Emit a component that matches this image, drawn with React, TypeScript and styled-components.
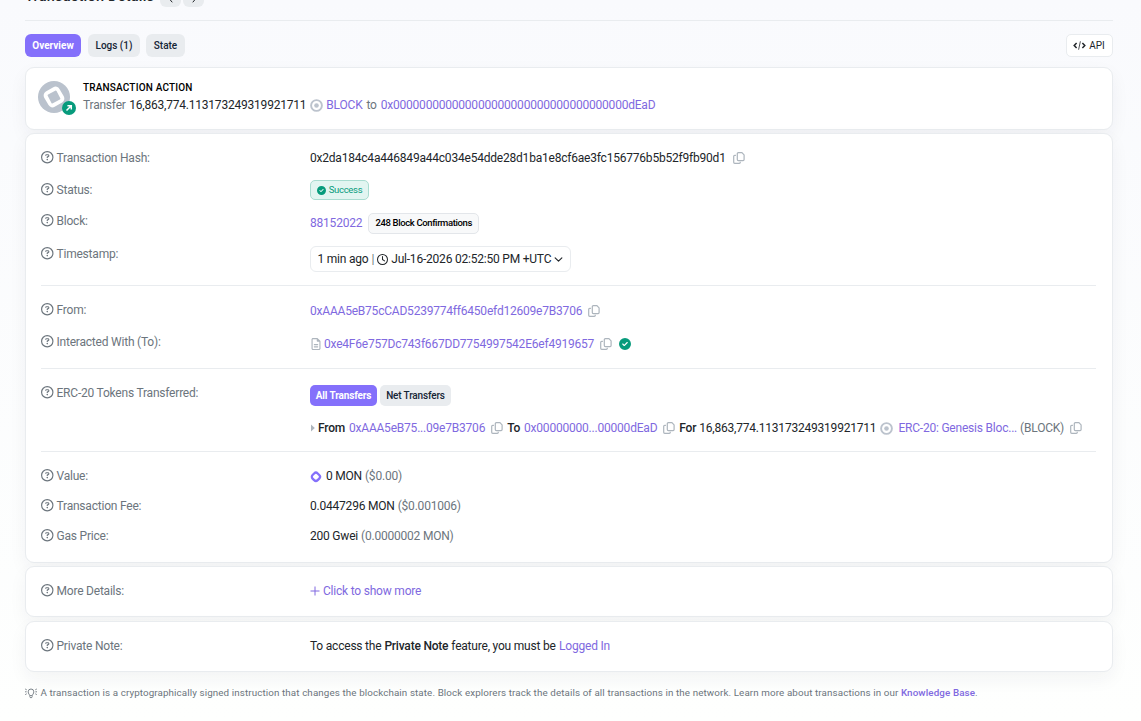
import React from 'react';
import styled, { createGlobalStyle } from 'styled-components';
import {
  FaRegCircleQuestion,
  FaRegFileLines,
  FaRegClock,
  FaCircleCheck,
} from 'react-icons/fa6';

const color = {
  link: '#8069e0',
  accent: '#8470fb',
  text: '#212529',
  muted: '#6c757d',
  line: '#e9ecef',
  faint: '#adb5bd',
  green: '#079b7c',
};

const GlobalStyle = createGlobalStyle`
  * { box-sizing: border-box; }
  body {
    margin: 0;
    height: 721px;
    overflow: hidden;
    background: linear-gradient(#f9fafd, #fefffe);
    font: 12px/20px Roboto, sans-serif;
    letter-spacing: -0.21px;
    color: ${color.text};
  }
  svg { flex: none; display: block; }
`;

const Page = styled.main`
  height: 721px;
  padding: 0 28px 0 25px;
  overflow: hidden;
`;

const Header = styled.header`
  display: flex;
  align-items: flex-end;
  height: 21px;
  padding-bottom: 13px;
  border-bottom: 1px solid ${color.line};
`;

const Title = styled.h1`
  width: 135px;
  margin: 0;
  font-size: 14.5px;
  line-height: 20px;
  font-weight: 500;
  letter-spacing: 0.22px;
  white-space: nowrap;
`;

const NavButton = styled.button`
  display: grid;
  place-items: center;
  width: 21px;
  height: 21px;
  margin: 0 2px 0 0;
  padding: 5px 0 0;
  border: 0;
  border-radius: 6px;
  background: ${color.line};
  color: ${color.text};
`;

const Tabs = styled.nav`
  display: flex;
  align-items: center;
  gap: 6px;
  height: 23px;
  margin: 13px 0 10px;
`;

const Tab = styled.button<{ $active?: boolean; $width: number; $small?: boolean }>`
  width: ${(p) => p.$width}px;
  height: ${(p) => (p.$small ? 21 : 23)}px;
  padding: ${(p) => (p.$small ? 0 : '1px 0 0')};
  border: 0;
  border-radius: ${(p) => (p.$small ? 5 : 6)}px;
  background: ${(p) => (p.$active ? color.accent : color.line)};
  color: ${(p) => (p.$active ? '#fff' : '#152536')};
  font: ${(p) => (p.$active ? 700 : 500)} 10px/20px Roboto, sans-serif;
  letter-spacing: ${(p) => (p.$small ? -0.15 : 0)}px;
  white-space: nowrap;
`;

const MainTab = styled(Tab)`
  margin-right: ${(p) => (p.$active ? 1 : 0)}px;
`;

const ApiButton = styled.button`
  display: flex;
  align-items: center;
  justify-content: center;
  gap: 3px;
  width: 47px;
  height: 23px;
  margin-left: auto;
  padding: 0 1px 0 0;
  border: 1px solid ${color.line};
  border-radius: 5px;
  background: #fff;
  color: ${color.text};
  font: 10px/20px Roboto, sans-serif;
`;

const Card = styled.section<{ $height: number; $gap?: number; $pad?: string }>`
  height: ${(p) => p.$height}px;
  margin-bottom: ${(p) => p.$gap ?? 3}px;
  padding: ${(p) => p.$pad ?? '14px 16px 14px 15px'};
  border: 1px solid ${color.line};
  border-radius: 9px;
  background: #fff;
  box-shadow: 0 7px 18px rgba(30, 35, 60, 0.05);
`;

const ActionCard = styled(Card)`
  display: flex;
  gap: 8px;
`;

const TokenAvatar = styled.div`
  position: relative;
  width: 37px;
  height: 33px;
`;

const AvatarBadge = styled.span`
  position: absolute;
  right: -1px;
  bottom: -1px;
`;

const ActionTitle = styled.div`
  font-size: 10px;
  line-height: 14px;
  font-weight: 500;
  letter-spacing: 0.18px;
  color: #000;
`;

const Line = styled.div<{ $height?: number; $top?: number }>`
  display: flex;
  align-items: center;
  height: ${(p) => p.$height ?? 20}px;
  margin-top: ${(p) => p.$top ?? 0}px;
  white-space: nowrap;
`;

const Text = styled.span<{ $tone?: 'muted' | 'strong'; $gap?: number }>`
  margin-right: ${(p) => p.$gap ?? 3}px;
  color: ${(p) => (p.$tone === 'muted' ? color.muted : color.text)};
  font-weight: ${(p) => (p.$tone === 'strong' ? 500 : 400)};
`;

const Link = styled.a<{ $gap?: number }>`
  margin-right: ${(p) => p.$gap ?? 3}px;
  color: ${color.link};
`;

const BlockLink = styled(Link)`
  padding-bottom: 1px;
`;

const Icon = styled.span<{ $gap?: number; $color?: string }>`
  display: flex;
  margin-right: ${(p) => p.$gap ?? 3}px;
  color: ${(p) => p.$color ?? color.faint};
`;

const Row = styled.div<{ $top?: number }>`
  display: grid;
  grid-template-columns: 269px 1fr;
  margin-top: ${(p) => p.$top ?? 0}px;
`;

const Label = styled.div`
  display: flex;
  align-items: center;
  gap: 3px;
  height: 20px;
  color: ${color.muted};
  white-space: nowrap;

  svg { margin-top: -1px; }
`;

const Divider = styled.hr<{ $top?: number }>`
  height: 1px;
  margin: ${(p) => p.$top ?? 13}px 0 0;
  border: 0;
  background: ${color.line};
`;

const Badge = styled.span<{ $success?: boolean; $width: number }>`
  display: flex;
  align-items: center;
  justify-content: center;
  gap: 3px;
  width: ${(p) => p.$width}px;
  height: ${(p) => (p.$success ? 20 : 21)}px;
  padding-bottom: ${(p) => (p.$success ? 0 : 1)}px;
  border: 1px solid ${(p) => (p.$success ? '#a9dcd1' : '#e3e6ea')};
  border-radius: 5px;
  background: ${(p) => (p.$success ? '#e2f5f1' : '#f8f9fa')};
  color: ${(p) => (p.$success ? color.green : '#000')};
  font-size: 9.5px;
  font-weight: ${(p) => (p.$success ? 400 : 500)};
  letter-spacing: ${(p) => (p.$success ? -0.3 : -0.38)}px;
`;

const TimeButton = styled.button`
  display: flex;
  align-items: center;
  width: 261px;
  height: 26px;
  padding: 0 6.5px;
  border: 1px solid ${color.line};
  border-radius: 6px;
  background: #fff;
  color: ${color.text};
  font: 12px/20px Roboto, sans-serif;
  letter-spacing: -0.21px;
  white-space: nowrap;
`;

const Footnote = styled.footer`
  display: flex;
  align-items: center;
  height: 20px;
  margin-top: 11px;
  font-size: 9.8px;
  letter-spacing: 0.11px;
  color: ${color.muted};
  white-space: nowrap;
`;

const KnowledgeLink = styled.a`
  color: ${color.link};
  font-weight: 500;
`;

const Copy = ({ gap }: { gap?: number }) => (
  <Icon $gap={gap}>
    <svg width="12" height="12" viewBox="0 0 12 12" fill="none" stroke="currentColor" strokeWidth="1.2">
      <path d="M5.3.7h3.6l2.2 2.2v4.7a1 1 0 0 1-1 1H5.3a1 1 0 0 1-1-1V1.7a1 1 0 0 1 1-1z" />
      <path d="M2.9 3.3H1.7a1 1 0 0 0-1 1v6a1 1 0 0 0 1 1h4.6a1 1 0 0 0 1-1V9.8" />
    </svg>
  </Icon>
);

const TokenDot = ({ gap }: { gap?: number }) => (
  <Icon $gap={gap}>
    <svg width="13" height="13" viewBox="0 0 13 13">
      <circle cx="6.5" cy="6.5" r="5.4" fill="#fff" stroke="#bcc3cd" strokeWidth="1.9" />
      <circle cx="6.5" cy="6.5" r="2.3" fill="#bcc3cd" />
    </svg>
  </Icon>
);

type FieldProps = { label: string; top?: number; children: React.ReactNode };

const Field = ({ label, top, children }: FieldProps) => (
  <Row $top={top}>
    <Label>
      <FaRegCircleQuestion size={12.5} />
      {label}
    </Label>
    <div>{children}</div>
  </Row>
);

const Chevron = ({ d, size = 8 }: { d: string; size?: number }) => (
  <svg width={size} height={size} viewBox="0 0 8 8" fill="none" stroke="currentColor" strokeWidth="1">
    <path d={d} strokeLinecap="round" strokeLinejoin="round" />
  </svg>
);

export default function App() {
  return (
    <>
      <GlobalStyle />
      <Page>
        <Header>
          <Title>Transaction Details</Title>
          <NavButton aria-label="Previous"><Chevron d="M5 1 2.5 4 5 7" /></NavButton>
          <NavButton aria-label="Next"><Chevron d="M3 1 5.5 4 3 7" /></NavButton>
        </Header>

        <Tabs>
          <MainTab $active $width={56}>Overview</MainTab>
          <MainTab $width={52}>Logs (1)</MainTab>
          <MainTab $width={39}>State</MainTab>
          <ApiButton>
            <svg width="13" height="9" viewBox="0 0 13 9" fill="none" stroke="currentColor">
              <path d="M3.6 2 1.2 4.5 3.6 7M9.4 2l2.4 2.5L9.4 7" strokeWidth="1.5" />
              <path d="M7.4.3 5.6 8.7" strokeWidth=".8" />
            </svg>
            API
          </ApiButton>
        </Tabs>

        <ActionCard $height={63} $pad="13px 12px">
          <TokenAvatar>
            <svg width="33" height="33" viewBox="0 0 33 33">
              <circle cx="16" cy="16" r="16" fill="#bac2cd" />
              <rect x="7.2" y="7.2" width="17.6" height="17.6" rx="4.5" fill="#fff" transform="rotate(60 16 16)" />
              <rect x="11" y="11" width="10" height="10" rx="1" fill="#bac2cd" transform="rotate(62 16 16)" />
            </svg>
            <AvatarBadge>
              <svg width="14" height="14" viewBox="0 0 14 14">
                <circle cx="7" cy="7" r="7" fill={color.green} />
                <path d="M4.5 9.5 9 5M5.4 4.7h3.9v3.9" fill="none" stroke="#fff" strokeWidth="1.5" />
              </svg>
            </AvatarBadge>
          </TokenAvatar>
          <div>
            <ActionTitle>TRANSACTION ACTION</ActionTitle>
            <Line>
              <Text $tone="muted" $gap={3.5}>Transfer</Text>
              <Text $gap={4}>16,863,774.113173249319921711</Text>
              <TokenDot />
              <Link $gap={4}>BLOCK</Link>
              <Text $tone="muted" $gap={4}>to</Text>
              <Link>0x000000000000000000000000000000000000dEaD</Link>
            </Line>
          </div>
        </ActionCard>

        <Card $height={430}>
          <Field label="Transaction Hash:">
            <Line>
              <Text $gap={7}>0x2da184c4a446849a44c034e54dde28d1ba1e8cf6ae3fc156776b5b52f9fb90d1</Text>
              <Copy />
            </Line>
          </Field>
          <Field label="Status:" top={12}>
            <Badge $success $width={59}>
              <FaCircleCheck size={9} />
              Success
            </Badge>
          </Field>
          <Field label="Block:" top={11}>
            <Line $top={2} $height={21}>
              <BlockLink $gap={6}>88152022</BlockLink>
              <Badge $width={111}>248 Block Confirmations</Badge>
            </Line>
          </Field>
          <Field label="Timestamp:" top={10}>
            <Line $top={2} $height={26}>
              <TimeButton>
                <Text>1 min ago</Text>
                <Text $tone="muted">|</Text>
                <Icon $color={color.text}><FaRegClock size={11} /></Icon>
                <Text>Jul-16-2026 02:52:50 PM +UTC</Text>
                <Chevron d="M1 2.5 4 5.5 7 2.5" size={9} />
              </TimeButton>
            </Line>
          </Field>
          <Divider />
          <Field label="From:" top={14}>
            <Line $top={1}>
              <Link $gap={6}>0xAAA5eB75cCAD5239774ff6450efd12609e7B3706</Link>
              <Copy />
            </Line>
          </Field>
          <Field label="Interacted With (To):" top={11}>
            <Line $top={2}>
              <Icon $gap={2}><FaRegFileLines size={12} /></Icon>
              <Link $gap={6}>0xe4F6e757Dc743f667DD7754997542E6ef4919657</Link>
              <Copy gap={7} />
              <Icon $color={color.green}><FaCircleCheck size={12} /></Icon>
            </Line>
          </Field>
          <Divider $top={14} />
          <Field label="ERC-20 Tokens Transferred:" top={14}>
            <Line $top={2} $height={21}>
              <Tab $active $small $width={67}>All Transfers</Tab>
              <Text />
              <Tab $small $width={71}>Net Transfers</Tab>
            </Line>
            <Line $top={12}>
              <Icon>
                <svg width="5" height="8" viewBox="0 0 5 8"><path d="M1 .5v7L4.8 4z" fill="currentColor" /></svg>
              </Icon>
              <Text $tone="strong" $gap={4}>From</Text>
              <Link $gap={6}>0xAAA5eB75...09e7B3706</Link>
              <Copy gap={4} />
              <Text $tone="strong" $gap={4}>To</Text>
              <Link $gap={6}>0x00000000...00000dEaD</Link>
              <Copy gap={4} />
              <Text $tone="strong">For</Text>
              <Text $gap={4}>16,863,774.113173249319921711</Text>
              <TokenDot gap={5} />
              <Link>ERC-20: Genesis Bloc...</Link>
              <Text $tone="muted" $gap={6}>(BLOCK)</Text>
              <Copy />
            </Line>
          </Field>
          <Divider />
          <Field label="Value:" top={14}>
            <Line>
              <Icon>
                <svg width="13" height="13" viewBox="0 0 13 13">
                  <rect x="2.3" y="3.2" width="7.2" height="7.2" rx="2.5" fill="none" stroke={color.accent} strokeWidth="2.3" transform="rotate(45 5.9 6.8)" />
                </svg>
              </Icon>
              <Text>0 MON</Text>
              <Text $tone="muted">($0.00)</Text>
            </Line>
          </Field>
          <Field label="Transaction Fee:" top={10}>
            <Line>
              <Text>0.0447296 MON</Text>
              <Text $tone="muted">($0.001006)</Text>
            </Line>
          </Field>
          <Field label="Gas Price:" top={10}>
            <Line>
              <Text>200 Gwei</Text>
              <Text $tone="muted">(0.0000002 MON)</Text>
            </Line>
          </Field>
        </Card>

        <Card $height={51} $gap={4}>
          <Field label="More Details:">
            <Line>
              <Icon $color={color.link}>
                <svg width="10" height="10" viewBox="0 0 10 10"><path d="M5 .5v9M.5 5h9" stroke="currentColor" /></svg>
              </Icon>
              <Link>Click to show more</Link>
            </Line>
          </Field>
        </Card>

        <Card $height={51} $gap={0}>
          <Field label="Private Note:">
            <Line>
              <Text>To access the</Text>
              <Text $tone="strong">Private Note</Text>
              <Text $gap={3.5}>feature, you must be</Text>
              <Link>Logged In</Link>
            </Line>
          </Field>
        </Card>

        <Footnote>
          <Icon $gap={3.5} $color={color.muted}>
            <svg width="12" height="11" viewBox="0 0 12 11" fill="none" stroke="currentColor" strokeWidth=".9">
              <path d="M4.7 7.6C4.5 6.4 3.2 5.7 3.2 3.8a2.8 2.8 0 0 1 5.6 0c0 1.9-1.3 2.6-1.5 3.8zM4.7 8.3c0 2 2.6 2 2.6 0M0 3.8h1.6M.2 1l1.5.8M.2 6.6l1.5-.8M10.4 3.8H12M11.8 1l-1.5.8M11.8 6.6l-1.5-.8" />
            </svg>
          </Icon>
          <span>
            A transaction is a cryptographically signed instruction that changes the blockchain state. Block explorers track the details of all transactions in the network. Learn more about transactions in our{' '}
            <KnowledgeLink>Knowledge Base</KnowledgeLink>.
          </span>
        </Footnote>
      </Page>
    </>
  );
}
